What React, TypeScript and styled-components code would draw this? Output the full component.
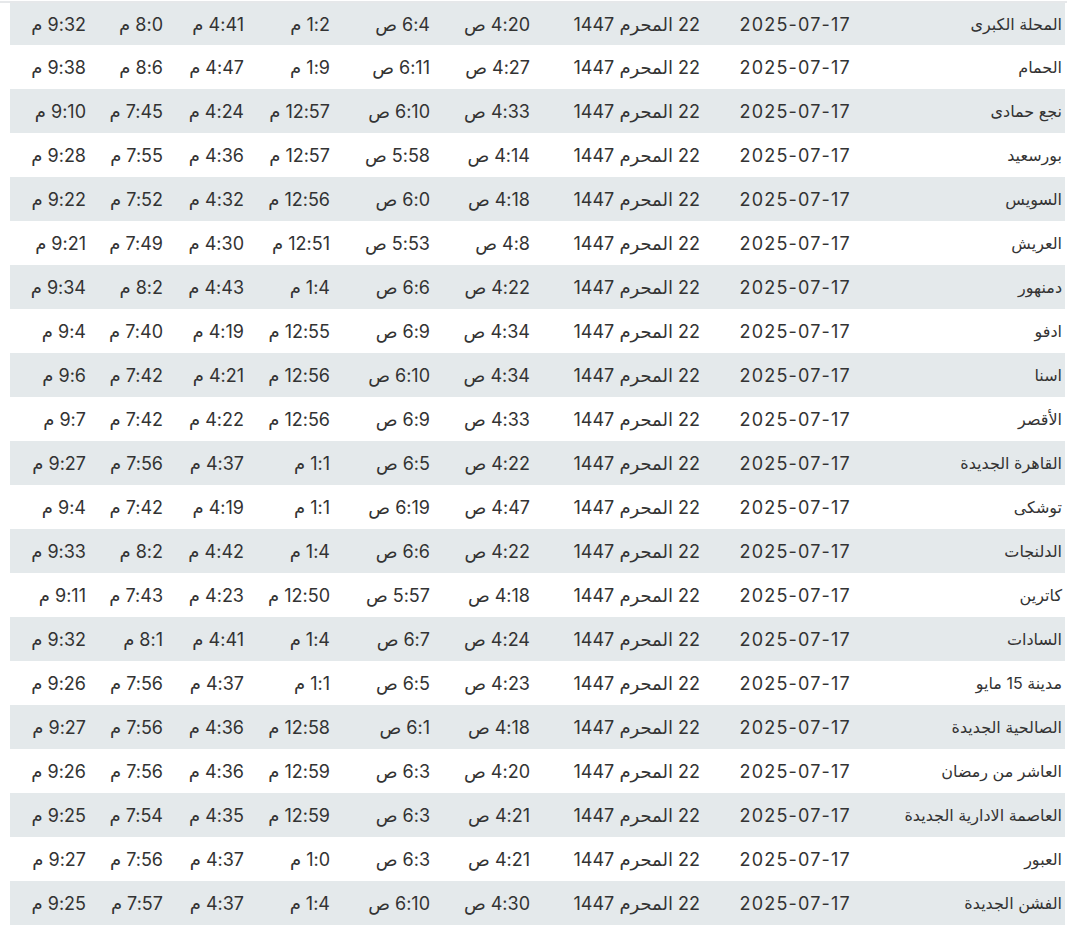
import React from "react";
import styled, { createGlobalStyle } from "styled-components";

const GlobalStyle = createGlobalStyle`
  html, body {
    margin: 0;
    padding: 0;
    background: #ffffff;
  }
  body {
    font-family: "Inter", "DejaVu Sans", "Noto Sans", sans-serif;
  }
`;

const Page = styled.div`
  width: 1067px;
  padding-top: 1px;
`;

const TopRule = styled.div`
  height: 2px;
  background: #e6e8ea;
`;

const Frame = styled.div`
  padding: 0 2px 0 10px;
`;

const Table = styled.table`
  width: 1055px;
  border-collapse: collapse;
  table-layout: fixed;
  direction: rtl;
  color: #333333;
  font-size: 18px;
`;

const Col = styled.col<{ $w: number }>`
  width: ${(p) => p.$w}px;
`;

const Row = styled.tr<{ $shaded: boolean; $h: number }>`
  height: ${(p) => p.$h}px;
  background: ${(p) => (p.$shaded ? "#e4e9eb" : "#ffffff")};
`;

const Cell = styled.td<{ $kind?: "name" | "date" | "text" }>`
  padding: 0 3px 0 0;
  text-align: right;
  vertical-align: middle;
  white-space: nowrap;
  overflow: hidden;
  font-size: ${(p) => (p.$kind === "name" ? "16px" : "18px")};
  letter-spacing: ${(p) =>
    p.$kind === "name" ? "0" : p.$kind === "date" ? "1.2px" : "0.4px"};
`;

type R = [string, string, string, string, string, string, string];

const rows: R[] = [
  ["المحلة الكبرى", "4:20 ص", "6:4 ص", "1:2 م", "4:41 م", "8:0 م", "9:32 م"],
  ["الحمام", "4:27 ص", "6:11 ص", "1:9 م", "4:47 م", "8:6 م", "9:38 م"],
  ["نجع حمادى", "4:33 ص", "6:10 ص", "12:57 م", "4:24 م", "7:45 م", "9:10 م"],
  ["بورسعيد", "4:14 ص", "5:58 ص", "12:57 م", "4:36 م", "7:55 م", "9:28 م"],
  ["السويس", "4:18 ص", "6:0 ص", "12:56 م", "4:32 م", "7:52 م", "9:22 م"],
  ["العريش", "4:8 ص", "5:53 ص", "12:51 م", "4:30 م", "7:49 م", "9:21 م"],
  ["دمنهور", "4:22 ص", "6:6 ص", "1:4 م", "4:43 م", "8:2 م", "9:34 م"],
  ["ادفو", "4:34 ص", "6:9 ص", "12:55 م", "4:19 م", "7:40 م", "9:4 م"],
  ["اسنا", "4:34 ص", "6:10 ص", "12:56 م", "4:21 م", "7:42 م", "9:6 م"],
  ["الأقصر", "4:33 ص", "6:9 ص", "12:56 م", "4:22 م", "7:42 م", "9:7 م"],
  ["القاهرة الجديدة", "4:22 ص", "6:5 ص", "1:1 م", "4:37 م", "7:56 م", "9:27 م"],
  ["توشكى", "4:47 ص", "6:19 ص", "1:1 م", "4:19 م", "7:42 م", "9:4 م"],
  ["الدلنجات", "4:22 ص", "6:6 ص", "1:4 م", "4:42 م", "8:2 م", "9:33 م"],
  ["كاترين", "4:18 ص", "5:57 ص", "12:50 م", "4:23 م", "7:43 م", "9:11 م"],
  ["السادات", "4:24 ص", "6:7 ص", "1:4 م", "4:41 م", "8:1 م", "9:32 م"],
  ["مدينة 15 مايو", "4:23 ص", "6:5 ص", "1:1 م", "4:37 م", "7:56 م", "9:26 م"],
  ["الصالحية الجديدة", "4:18 ص", "6:1 ص", "12:58 م", "4:36 م", "7:56 م", "9:27 م"],
  ["العاشر من رمضان", "4:20 ص", "6:3 ص", "12:59 م", "4:36 م", "7:56 م", "9:26 م"],
  ["العاصمة الادارية الجديدة", "4:21 ص", "6:3 ص", "12:59 م", "4:35 م", "7:54 م", "9:25 م"],
  ["العبور", "4:21 ص", "6:3 ص", "1:0 م", "4:37 م", "7:56 م", "9:27 م"],
  ["الفشن الجديدة", "4:30 ص", "6:10 ص", "1:4 م", "4:37 م", "7:57 م", "9:25 م"],
];

const widths = [211, 151, 170, 100, 100, 86, 81, 77, 79];

export default function App() {
  return (
    <Page>
      <GlobalStyle />
      <TopRule />
      <Frame>
        <Table>
          <colgroup>
            {widths.map((w, i) => (
              <Col key={i} $w={w} />
            ))}
          </colgroup>
          <tbody>
            {rows.map((r, i) => (
              <Row key={r[0]} $shaded={i % 2 === 0} $h={i === 0 ? 42 : 44}>
                <Cell $kind="name">{r[0]}</Cell>
                <Cell $kind="date">2025-07-17</Cell>
                <Cell $kind="text">22 المحرم 1447</Cell>
                {r.slice(1).map((t, j) => (
                  <Cell key={j} $kind="text">
                    {t}
                  </Cell>
                ))}
              </Row>
            ))}
          </tbody>
        </Table>
      </Frame>
    </Page>
  );
}
